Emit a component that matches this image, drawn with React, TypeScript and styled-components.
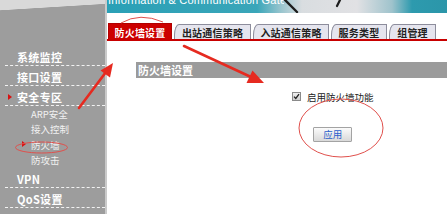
import React from 'react'
import styled, { createGlobalStyle } from 'styled-components'

const GlobalStyle = createGlobalStyle`
	html, body {
		margin: 0;
		padding: 0;
		background: #fff;
	}
	body {
		font-family: "Noto Sans CJK SC", "Liberation Sans", sans-serif;
	}
`

const Page = styled.div`
	position: relative;
	display: flex;
	width: 447px;
	height: 214px;
	overflow: hidden;
`

const Sidebar = styled.nav`
	box-sizing: border-box;
	width: 107px;
	flex-shrink: 0;
	padding-top: 46px;
	border-right: 2px solid #cacaca;
	background: linear-gradient(176.5deg, #d9d9d9 0 10px, #9d9d9d 10.6px);
`

const MenuItem = styled.div<{ $marker?: boolean }>`
	position: relative;
	box-sizing: border-box;
	display: flex;
	align-items: center;
	height: 20px;
	margin-left: 5px;
	padding: 3px 0 0 12px;
	border-bottom: 1px dashed #f2f2f2;
	color: #fff;
	font-size: 11px;
	font-weight: 700;
	letter-spacing: 0.3px;

	&::before {
		content: '';
		display: ${({ $marker }) => ($marker ? 'block' : 'none')};
		position: absolute;
		left: 3px;
		top: 8px;
		border-left: 4px solid #d81010;
		border-top: 3.5px solid transparent;
		border-bottom: 3.5px solid transparent;
	}
`

const SubItem = styled.div<{ $marker?: boolean }>`
	position: relative;
	display: flex;
	align-items: center;
	height: 15.5px;
	padding-left: 31px;
	color: #f1f1f1;
	font-size: 9.5px;

	&::before {
		content: '';
		display: ${({ $marker }) => ($marker ? 'block' : 'none')};
		position: absolute;
		left: 22px;
		top: 4px;
		border-left: 4px solid #d81010;
		border-top: 3.5px solid transparent;
		border-bottom: 3.5px solid transparent;
	}
`

const Main = styled.main`
	display: flex;
	flex-direction: column;
	flex: 1;
	min-width: 0;
`

const Banner = styled.header`
	position: relative;
	height: 13px;
	overflow: hidden;
	background: linear-gradient(
		90deg,
		#2aa0b6 0,
		#3aa6b9 150px,
		#9cc6cf 175px,
		#d9dde0 195px,
		#e1e1e4 250px,
		#9fc3cc 285px,
		#2d9aae 305px,
		#2b96a9 340px
	);
`

const BannerTitle = styled.div`
	width: 176px;
	overflow: hidden;
	margin-top: -6px;
	padding-left: 1px;
	color: #fff;
	font-family: "Liberation Sans", Arial, sans-serif;
	font-size: 11px;
	letter-spacing: 0.2px;
	white-space: nowrap;
`

const BannerArt = styled.svg`
	position: absolute;
	left: 170px;
	top: 0;
`

const TabBar = styled.div`
	display: flex;
	align-items: flex-end;
	gap: 2px;
	height: 18px;
	margin-top: 8px;
	padding-left: 1px;
	border-bottom: 2px solid #c80000;
`

const Tab = styled.div<{ $active?: boolean; $w: number }>`
	box-sizing: border-box;
	display: flex;
	align-items: center;
	justify-content: center;
	width: ${({ $w }) => $w}px;
	height: ${({ $active }) => ($active ? 16 : 15)}px;
	padding-top: 1px;
	border: 1px solid ${({ $active }) => ($active ? '#b00000' : '#8d8d9c')};
	border-bottom: none;
	border-top-left-radius: ${({ $active }) => ($active ? '0' : '5px 11px')};
	background: ${({ $active }) => ($active ? '#cc0000' : '#e5e5ee')};
	color: ${({ $active }) => ($active ? '#fff' : '#222')};
	font-size: 10px;
	font-weight: 700;
	letter-spacing: 0.2px;
	white-space: nowrap;
`

const SectionHeader = styled.h2`
	height: 16px;
	margin: 21px 0 0 29px;
	padding-left: 2px;
	background: #9b9b9b;
	color: #fff;
	font-size: 11px;
	font-weight: 700;
	line-height: 16px;
`

const Form = styled.div`
	display: flex;
	flex-direction: column;
	align-items: center;
	align-self: flex-start;
	margin: 13px 0 0 185px;
`

const CheckRow = styled.label`
	display: flex;
	align-items: center;
	height: 11px;
	color: #222;
	font-size: 9.5px;
`

const CheckBox = styled.span`
	box-sizing: border-box;
	display: flex;
	align-items: center;
	justify-content: center;
	width: 9px;
	height: 9px;
	margin-right: 6px;
	border: 1px solid #8a8a8a;
	background: linear-gradient(#f0f0f0, #cfcfcf);
`

const ApplyButton = styled.button`
	box-sizing: border-box;
	width: 39px;
	height: 15px;
	margin-top: 25px;
	padding: 0;
	border: 1px solid #a3a3a3;
	border-radius: 1px;
	background: linear-gradient(#fbfbfb, #d9d9d9);
	color: #2a5fcc;
	font-family: "Noto Sans CJK SC", sans-serif;
	font-size: 9.5px;
	line-height: 13px;
`

const Annotations = styled.svg`
	position: absolute;
	left: 0;
	top: 0;
	pointer-events: none;
`

const tabs = [
	{ label: '防火墙设置', w: 64, active: true },
	{ label: '出站通信策略', w: 77 },
	{ label: '入站通信策略', w: 76 },
	{ label: '服务类型', w: 56 },
	{ label: '组管理', w: 47 },
]

const App = () => (
	<>
		<GlobalStyle />
		<Page>
			<Sidebar>
				<MenuItem>系统监控</MenuItem>
				<MenuItem>接口设置</MenuItem>
				<MenuItem $marker>安全专区</MenuItem>
				<SubItem>ARP安全</SubItem>
				<SubItem>接入控制</SubItem>
				<SubItem $marker>防火墙</SubItem>
				<SubItem>防攻击</SubItem>
				<MenuItem>VPN</MenuItem>
				<MenuItem>QoS设置</MenuItem>
			</Sidebar>
			<Main>
				<Banner>
					<BannerTitle>Information &amp; Communication Gateway</BannerTitle>
					<BannerArt width="120" height="13" viewBox="0 0 120 13">
						<path d="M7 -1 L20 12" stroke="#1c1c1c" strokeWidth="2.4" strokeLinecap="round" />
						<path d="M63 0 L60 6" stroke="#1c1c1c" strokeWidth="2.2" strokeLinecap="round" />
					</BannerArt>
				</Banner>
				<TabBar>
					{tabs.map((t) => (
						<Tab key={t.label} $active={t.active} $w={t.w}>
							{t.label}
						</Tab>
					))}
				</TabBar>
				<SectionHeader>防火墙设置</SectionHeader>
				<Form>
					<CheckRow>
						<CheckBox>
							<svg width="7" height="7" viewBox="0 0 7 7">
								<path d="M1 3.6 L2.8 5.5 L6 1.2" fill="none" stroke="#222" strokeWidth="1.3" />
							</svg>
						</CheckBox>
						启用防火墙功能
					</CheckRow>
					<ApplyButton>应用</ApplyButton>
				</Form>
			</Main>
			<Annotations width="447" height="214" viewBox="0 0 447 214">
				<ellipse cx="341" cy="128" rx="42" ry="29" fill="none" stroke="#e0504c" strokeWidth="1" />
				<ellipse cx="41.5" cy="147.5" rx="26" ry="5.5" fill="none" stroke="#e0504c" strokeWidth="1" />
				<path d="M121 23 Q140 12 163 22" fill="none" stroke="#e0504c" strokeWidth="1" />
				<line x1="79" y1="108" x2="106" y2="72" stroke="#e62a20" strokeWidth="2.6" strokeLinecap="round" />
				<polygon points="113,63 110,77.5 100.5,70.5" fill="#e62a20" />
				<line x1="184" y1="46" x2="251" y2="77" stroke="#e62a20" strokeWidth="2.6" strokeLinecap="round" />
				<polygon points="264,83 246.5,83 252.5,70.5" fill="#e62a20" />
			</Annotations>
		</Page>
	</>
)

export default App
